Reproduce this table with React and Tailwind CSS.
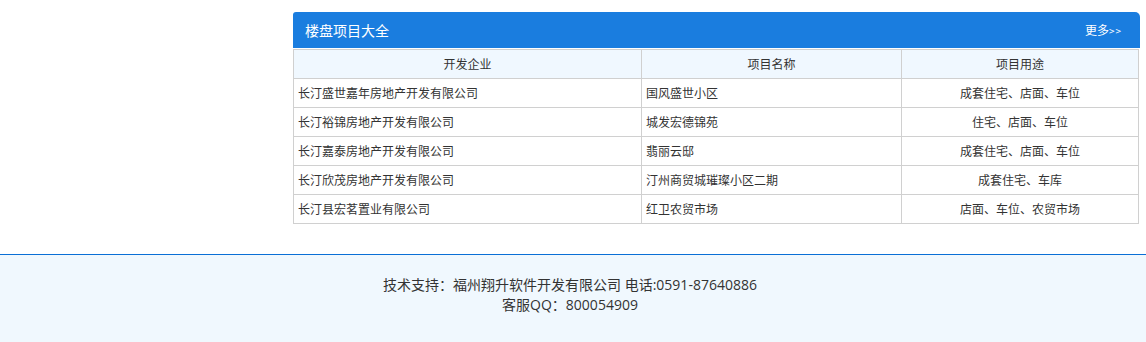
const rows = [
  { company: '长汀盛世嘉年房地产开发有限公司', name: '国风盛世小区', use: '成套住宅、店面、车位' },
  { company: '长汀裕锦房地产开发有限公司', name: '城发宏德锦苑', use: '住宅、店面、车位' },
  { company: '长汀嘉泰房地产开发有限公司', name: '翡丽云邸', use: '成套住宅、店面、车位' },
  { company: '长汀欣茂房地产开发有限公司', name: '汀州商贸城璀璨小区二期', use: '成套住宅、车库' },
  { company: '长汀县宏茗置业有限公司', name: '红卫农贸市场', use: '店面、车位、农贸市场' },
]

function ProjectList() {
  return (
    <div className="w-[847px]">
      <div className="h-[36px] bg-[#1a7ddf] rounded-tl-[3px] rounded-tr-[5px] flex items-center justify-between pl-[12px] pr-[18px] text-white">
        <span className="text-[14px]">楼盘项目大全</span>
        <a href="#" className="text-[12px]">更多<span className="text-[10px] tracking-[1px]">&gt;&gt;</span></a>
      </div>
      <table className="mt-[1px] w-[846px] border-collapse text-[12px] text-[#333]">
        <thead>
          <tr className="bg-[#f0f8ff] h-[29px]">
            <th className="border border-[#d0d0d0] font-normal w-[348px]">开发企业</th>
            <th className="border border-[#d0d0d0] font-normal w-[260px]">项目名称</th>
            <th className="border border-[#d0d0d0] font-normal">项目用途</th>
          </tr>
        </thead>
        <tbody>
          {rows.map(r => (
            <tr key={r.company} className="h-[29px]">
              <td className="border border-[#d0d0d0] pl-[4px]">{r.company}</td>
              <td className="border border-[#d0d0d0] pl-[4px]">{r.name}</td>
              <td className="border border-[#d0d0d0] text-center">{r.use}</td>
            </tr>
          ))}
        </tbody>
      </table>
    </div>
  )
}

export default function App() {
  return (
    <div className="font-['Noto_Sans_CJK_SC','Noto_Sans',sans-serif] bg-white min-h-[342px]">
      <div className="flex pt-[12px]">
        <div className="w-[293px] shrink-0" />
        <ProjectList />
      </div>
      <footer className="mt-[30px] border-t border-[#0a6fd6] bg-[#f0f8fe] pt-[20px] pb-[30px] pr-[6px] text-center font-['Open_Sans','Noto_Sans_CJK_SC',sans-serif] text-[14px] leading-[20px] text-[#333]">
        <p>技术支持：福州翔升软件开发有限公司 电话:0591-87640886</p>
        <p>客服QQ：800054909</p>
      </footer>
    </div>
  )
}
